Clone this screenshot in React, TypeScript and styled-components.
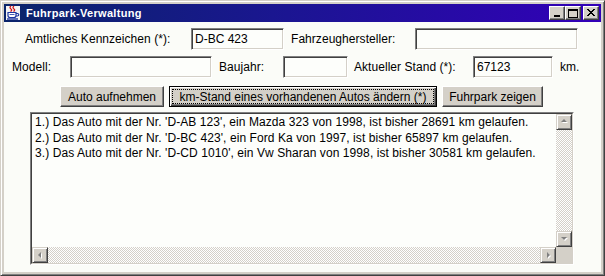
import React from 'react';
import styled, { createGlobalStyle } from 'styled-components';

const GlobalStyle = createGlobalStyle`
  html, body {
    margin: 0;
    padding: 0;
    background: #d4d0c8;
  }
  * {
    box-sizing: border-box;
  }
`;

const FONT = `"Liberation Sans", Arial, sans-serif`;

const Frame = styled.div`
  width: 605px;
  height: 276px;
  background: #d4d0c8;
  border: 1px solid;
  border-color: #d4d0c8 #404040 #404040 #d4d0c8;
  box-shadow: inset 1px 1px 0 #fff, inset -1px -1px 0 #808080;
  padding: 3px;
  display: flex;
  flex-direction: column;
  font-family: ${FONT};
`;

const TitleBar = styled.div`
  height: 18px;
  flex: none;
  display: flex;
  align-items: center;
  background: linear-gradient(to right, #0a246a 0%, #1a1690 45%, #3200b8 100%);
  padding: 0 2px 0 0;
`;

const TitleText = styled.span`
  color: #fff;
  font: bold 11px ${FONT};
  letter-spacing: 0.3px;
  margin-left: 5px;
  flex: 1;
`;

const TitleButtons = styled.div`
  display: flex;
  align-items: center;
`;

const CaptionButton = styled.div<{ $gap?: number }>`
  width: 16px;
  height: 14px;
  background: #d4d0c8;
  border: 1px solid;
  border-color: #fff #404040 #404040 #fff;
  box-shadow: inset -1px -1px 0 #808080;
  margin-left: ${({ $gap }) => $gap ?? 0}px;
  display: flex;
  align-items: center;
  justify-content: center;
`;

const Content = styled.div`
  flex: 1;
  background: #fbfcf8;
  display: flex;
  flex-direction: column;
  padding-top: 6px;
`;

const Row = styled.div<{ $left: number; $mt?: number }>`
  display: flex;
  align-items: center;
  padding-left: ${({ $left }) => $left}px;
  margin-top: ${({ $mt }) => $mt ?? 0}px;
  height: 22px;
`;

const Label = styled.span<{ $w?: number }>`
  width: ${({ $w }) => ($w ? `${$w}px` : 'auto')};
  font: 12px ${FONT};
  letter-spacing: 0.05px;
  color: #000;
  white-space: nowrap;
  flex: none;
`;

const Field = styled.input<{ $w: number; $mr?: number }>`
  width: ${({ $w }) => $w}px;
  height: 22px;
  flex: none;
  margin-right: ${({ $mr }) => $mr ?? 0}px;
  border: 1px solid;
  border-color: #808080 #fff #fff #808080;
  box-shadow: inset 1px 1px 0 #404040, inset -1px -1px 0 #d4d0c8;
  background: #fdfefb;
  padding: 0 3px;
  font: 12px ${FONT};
  color: #000;
  outline: none;
`;

const ButtonRow = styled.div`
  display: flex;
  gap: 5px;
  padding-left: 56px;
  margin-top: 8px;
`;

const Button = styled.button<{ $w: number; $focused?: boolean }>`
  width: ${({ $w }) => $w}px;
  height: 21px;
  padding: 0;
  background: #d4d0c8;
  border: 1px solid;
  border-color: ${({ $focused }) =>
    $focused ? '#000' : '#fff #404040 #404040 #fff'};
  box-shadow: ${({ $focused }) =>
    $focused
      ? 'inset 1px 1px 0 #fff, inset -1px -1px 0 #404040, inset -2px -2px 0 #808080'
      : 'inset -1px -1px 0 #808080'};
  outline: ${({ $focused }) => ($focused ? '1px dotted #000' : 'none')};
  outline-offset: -4px;
  font: 12px ${FONT};
  color: #000;
  white-space: nowrap;
`;

const TextAreaOuter = styled.div`
  margin: 5px 0 0 26px;
  width: 544px;
  height: 153px;
  border: 1px solid;
  border-color: #808080 #fff #fff #808080;
`;

const TextAreaInner = styled.div`
  width: 100%;
  height: 100%;
  border: 1px solid;
  border-color: #404040 #d4d0c8 #d4d0c8 #404040;
  display: grid;
  grid-template-columns: 1fr 16px;
  grid-template-rows: 1fr 16px;
`;

const TextBody = styled.div`
  background: #fdfefb;
  padding: 1px 3px;
  font: 12px ${FONT};
  letter-spacing: 0.08px;
  line-height: 15.5px;
  color: #000;
  white-space: pre;
  overflow: hidden;
`;

const ScrollBar = styled.div<{ $vertical?: boolean }>`
  display: flex;
  flex-direction: ${({ $vertical }) => ($vertical ? 'column' : 'row')};
`;

const Track = styled.div`
  flex: 1;
  background: repeating-conic-gradient(#d4d0c8 0% 25%, #ffffff 0% 50%) 0 0 / 2px 2px;
`;

const ArrowButton = styled.div`
  width: 16px;
  height: 16px;
  flex: none;
  background: #d4d0c8;
  border: 1px solid;
  border-color: #d4d0c8 #404040 #404040 #d4d0c8;
  box-shadow: inset 1px 1px 0 #fff, inset -1px -1px 0 #808080;
  display: flex;
  align-items: center;
  justify-content: center;
`;

const Corner = styled.div`
  background: #d4d0c8;
`;

type Dir = 'up' | 'down' | 'left' | 'right';

const arrowPoints: Record<Dir, string> = {
  up: '4,1 7,4 1,4',
  down: '1,2 7,2 4,5',
  left: '5,1 5,7 2,4',
  right: '3,1 3,7 6,4',
};

const Arrow = ({ dir }: { dir: Dir }) => (
  <ArrowButton>
    <svg width="8" height="8" viewBox="0 0 8 8">
      <polygon points={arrowPoints[dir]} fill="#fff" transform="translate(1,1)" />
      <polygon points={arrowPoints[dir]} fill="#808080" />
    </svg>
  </ArrowButton>
);

const JavaIcon = () => (
  <svg width="16" height="16" viewBox="0 0 16 16" style={{ marginLeft: 1 }}>
    <rect x="1" y="1" width="14" height="14" fill="#f4f4f4" />
    <path d="M6 1 q-2 1.5 0 3 q1.5 1 -0.5 2.5" stroke="#d01818" strokeWidth="1.3" fill="none" />
    <path d="M9 1 q-2 1.5 0 3 q1.5 1 -0.5 2.5" stroke="#d01818" strokeWidth="1.3" fill="none" />
    <path d="M3 7.5 h8 v3 q0 2 -2 2 h-4 q-2 0 -2 -2 z" stroke="#1c34a0" strokeWidth="1.2" fill="#fff" />
    <path d="M11 8.5 h1.5 q1.3 0 1.3 1.3 q0 1.2 -1.5 1.2 h-1.3" stroke="#1c34a0" strokeWidth="1.1" fill="none" />
    <path d="M2 14 h11" stroke="#1c34a0" strokeWidth="1.4" />
    <path d="M4.5 9.5 h5" stroke="#1c34a0" strokeWidth="0.8" />
  </svg>
);

const MinGlyph = () => (
  <svg width="8" height="8" viewBox="0 0 8 8">
    <rect x="1" y="6" width="6" height="2" fill="#000" />
  </svg>
);

const MaxGlyph = () => (
  <svg width="10" height="9" viewBox="0 0 10 9">
    <rect x="0.5" y="0.5" width="9" height="8" fill="none" stroke="#000" />
    <rect x="0" y="0" width="10" height="2" fill="#000" />
  </svg>
);

const CloseGlyph = () => (
  <svg width="9" height="8" viewBox="0 0 9 8">
    <path d="M1 0 L8 7 M0 0 L7 7 M8 0 L1 7 M7 0 L0 7" stroke="#000" strokeWidth="1" />
  </svg>
);

const cars = [
  "1.) Das Auto mit der Nr. 'D-AB 123', ein Mazda 323 von 1998, ist bisher 28691 km gelaufen.",
  "2.) Das Auto mit der Nr. 'D-BC 423', ein Ford Ka von 1997, ist bisher 65897 km gelaufen.",
  "3.) Das Auto mit der Nr. 'D-CD 1010', ein Vw Sharan von 1998, ist bisher 30581 km gelaufen.",
];

export default function App() {
  return (
    <>
      <GlobalStyle />
      <Frame>
        <TitleBar>
          <JavaIcon />
          <TitleText>Fuhrpark-Verwaltung</TitleText>
          <TitleButtons>
            <CaptionButton><MinGlyph /></CaptionButton>
            <CaptionButton><MaxGlyph /></CaptionButton>
            <CaptionButton $gap={2}><CloseGlyph /></CaptionButton>
          </TitleButtons>
        </TitleBar>

        <Content>
          <Row $left={21}>
            <Label $w={166}>Amtliches Kennzeichen (*):</Label>
            <Field $w={93} $mr={7} defaultValue="D-BC 423" />
            <Label $w={124}>Fahrzeughersteller:</Label>
            <Field $w={163} defaultValue="" />
          </Row>

          <Row $left={8} $mt={6}>
            <Label $w={58}>Modell:</Label>
            <Field $w={142} $mr={7} defaultValue="" />
            <Label $w={64}>Baujahr:</Label>
            <Field $w={65} $mr={6} defaultValue="" />
            <Label $w={119}>Aktueller Stand (*):</Label>
            <Field $w={80} $mr={7} defaultValue="67123" />
            <Label>km.</Label>
          </Row>

          <ButtonRow>
            <Button $w={104}>Auto aufnehmen</Button>
            <Button $w={268} $focused>km-Stand eines vorhandenen Autos ändern (*)</Button>
            <Button $w={101}>Fuhrpark zeigen</Button>
          </ButtonRow>

          <TextAreaOuter>
            <TextAreaInner>
              <TextBody>{cars.join('\n')}</TextBody>
              <ScrollBar $vertical>
                <Arrow dir="up" />
                <Track />
                <Arrow dir="down" />
              </ScrollBar>
              <ScrollBar>
                <Arrow dir="left" />
                <Track />
                <Arrow dir="right" />
              </ScrollBar>
              <Corner />
            </TextAreaInner>
          </TextAreaOuter>
        </Content>
      </Frame>
    </>
  );
}
